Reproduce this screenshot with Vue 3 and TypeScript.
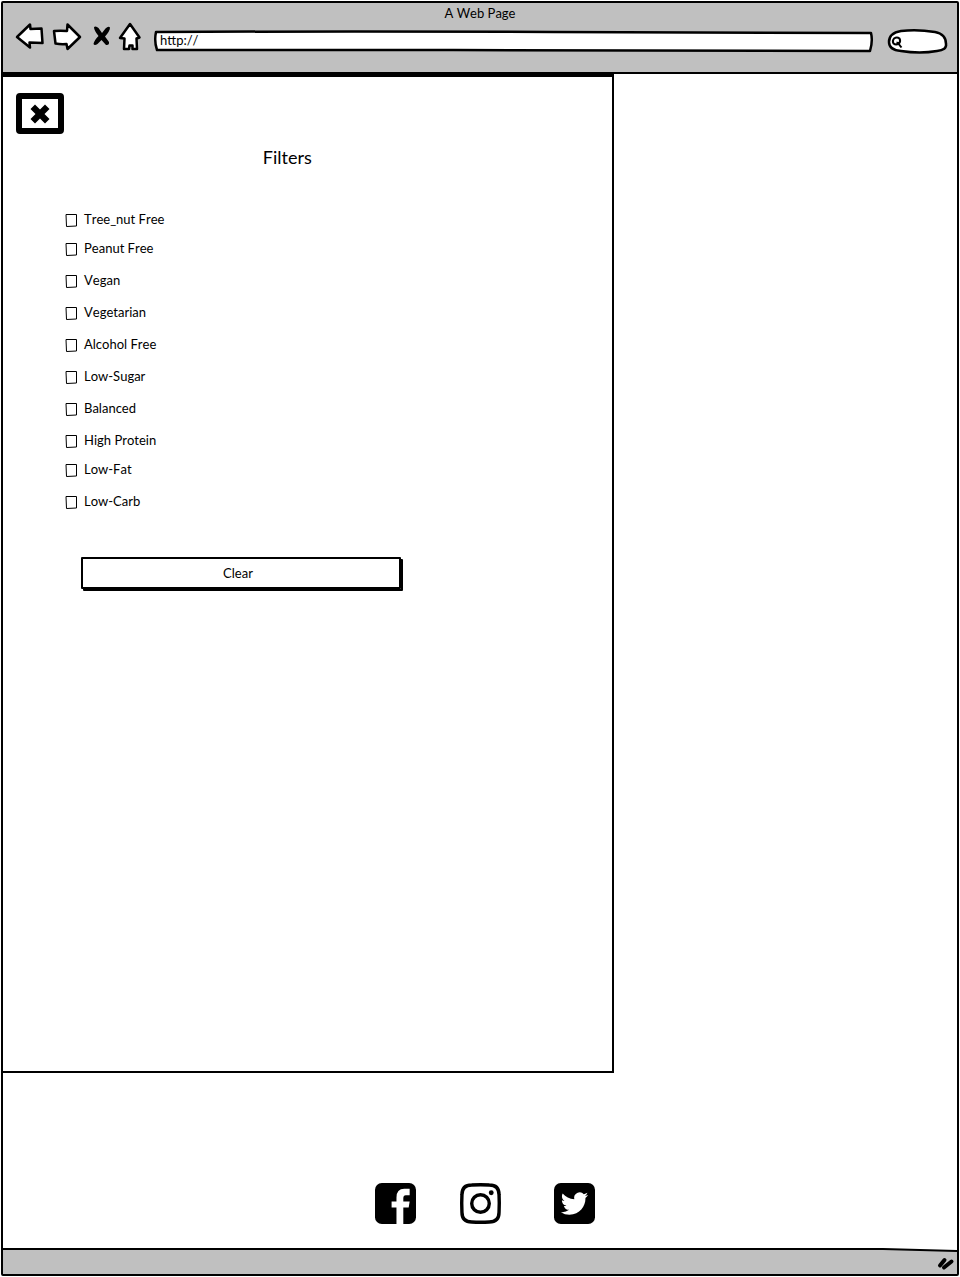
<script setup lang="ts">
import { ref } from 'vue'

interface Filter {
  id: string
  label: string
  compact?: boolean
}

const filters: Filter[] = [
  { id: 'tree-nut-free', label: 'Tree_nut Free', compact: true },
  { id: 'peanut-free', label: 'Peanut Free' },
  { id: 'vegan', label: 'Vegan' },
  { id: 'vegetarian', label: 'Vegetarian' },
  { id: 'alcohol-free', label: 'Alcohol Free' },
  { id: 'low-sugar', label: 'Low-Sugar' },
  { id: 'balanced', label: 'Balanced' },
  { id: 'high-protein', label: 'High Protein', compact: true },
  { id: 'low-fat', label: 'Low-Fat' },
  { id: 'low-carb', label: 'Low-Carb' },
]

const selected = ref<string[]>([])
const address = ref('http://')
const query = ref('')
const open = ref(true)

function clearFilters(): void {
  selected.value = []
}
</script>

<template>
  <div class="browser">
    <header class="chrome">
      <p class="page-title">A Web Page</p>
      <div class="toolbar">
        <button class="tool" type="button" aria-label="Back">
          <svg width="28" height="28" viewBox="0 0 28 28">
            <path class="outline" d="M1 15 14 2.500 14.500 7 25.500 6.500 26.500 21 13.500 20.500 14 25.500Z" />
          </svg>
        </button>
        <button class="tool" type="button" aria-label="Forward">
          <svg width="30" height="28" viewBox="0 0 30 28">
            <path class="outline" d="M2 9Q9 8.500 15 9L15.500 2.500 28 15 15.500 27 14.500 22Q9 22.500 3.500 21.500Z" />
          </svg>
        </button>
        <button class="tool" type="button" aria-label="Stop">
          <svg width="21" height="28" viewBox="0 0 21 28">
            <path d="M4 5Q6 3.500 8.500 6L12 11 15.500 6.500Q18.500 3.500 20 5.500 20 9 15 14.500L19 20Q19.500 23.500 16 23L11.500 18 7.500 22Q4.500 24 3.500 22 4 18.500 8.500 14 4 8.500 4 5Z" />
          </svg>
        </button>
        <button class="tool" type="button" aria-label="Home">
          <svg width="22" height="28" viewBox="0 0 22 28">
            <path class="outline" d="M11 2 20.500 15.500 17.500 16.500 18 27 13.500 27 13.500 23.500 10.500 23.500 10 27 5 27 5.500 16.500 1 16Z" />
          </svg>
        </button>
        <div class="field address">
          <svg class="shape" viewBox="0 0 720 22" preserveAspectRatio="none" aria-hidden="true">
            <path class="outline" d="M2 2Q200 1 400 2T718 3Q720 11 717 21Q500 20 300 20T3 20Q0 11 2 2Z" />
          </svg>
          <input v-model="address" type="text" aria-label="Address" />
        </div>
        <div class="field search">
          <svg class="shape" viewBox="0 0 61 26" preserveAspectRatio="none" aria-hidden="true">
            <path class="outline" d="M14 3Q30 1 48 4Q59 6 59 16Q60 22 50 23Q33 26 14 23Q2 22 2 14Q2 5 14 3Z" />
          </svg>
          <svg class="lens" width="12" height="13" viewBox="0 0 12 13" aria-hidden="true">
            <path d="M3 2.500Q6 .5 8.500 2.500 10 5.500 8 7.500 5 9.500 2.500 7.500 1 5 3 2.500ZM5.500 6.500Q8 7 8.500 9L10.500 11.500" />
          </svg>
          <input v-model="query" type="search" aria-label="Search" />
        </div>
      </div>
    </header>

    <main class="content">
      <aside v-if="open" class="panel">
        <button class="close" type="button" aria-label="Close filters" @click="open = false">
          <svg width="20" height="20" viewBox="0 0 20 20">
            <path d="M5 .5 10 5.500 15 .5 19.500 5 14.500 10 19.500 15 15 19.500 10 14.500 5 19.500 .5 15 5.500 10 .5 5Z" />
          </svg>
        </button>
        <h1>Filters</h1>
        <ul class="filters">
          <li v-for="item in filters" :key="item.id" :class="{ compact: item.compact }">
            <label :for="item.id">
              <span class="check">
                <input :id="item.id" v-model="selected" type="checkbox" :value="item.id" />
                <svg width="12" height="14" viewBox="0 0 12 14" aria-hidden="true">
                  <path d="M1 1.500 11.500 1.500 11.500 13 1.500 13.500Z" />
                  <path class="tick" d="M3 7 5 10 9 4" />
                </svg>
              </span>
              <span>{{ item.label }}</span>
            </label>
          </li>
        </ul>
        <button class="clear" type="button" @click="clearFilters">Clear</button>
      </aside>

      <nav class="social" aria-label="Social media">
        <a href="#facebook" aria-label="Facebook">
          <svg width="41" height="41" viewBox="0 0 42 42">
            <rect width="42" height="42" rx="7" />
            <path fill="#fff" d="M22 42V25H17V19H22V15Q22 6 30 6H35.500V12.500H31.500Q29 12.500 29 15.500V19H35.500L34.500 25H29V42Z" />
          </svg>
        </a>
        <a href="#instagram" aria-label="Instagram">
          <svg width="41" height="41" viewBox="0 0 42 42">
            <path fill="none" stroke="#000" stroke-width="3.500" d="M12 2Q21 1.500 30 2 40 2 40 12 40.500 21 40 30 40 40 30 40 21 40.500 12 40 2 40 2 30 1.500 21 2 12 2 2 12 2Z" />
            <circle cx="21" cy="21" r="9" fill="none" stroke="#000" stroke-width="3.500" />
            <circle cx="32" cy="10" r="2.500" />
          </svg>
        </a>
        <a class="twitter" href="#twitter" aria-label="Twitter">
          <svg width="41" height="41" viewBox="0 0 42 42">
            <rect width="42" height="42" rx="7" />
            <path fill="#fff" transform="translate(7 7) scale(1.170)" d="M23.950 4.570a10 10 0 0 1-2.820.77 4.960 4.960 0 0 0 2.160-2.720c-.95.55-2 .95-3.120 1.180a4.920 4.920 0 0 0-8.380 4.480C7.690 8.090 4.070 6.130 1.640 3.160a4.800 4.800 0 0 0-.67 2.480c0 1.710.87 3.210 2.190 4.100a4.900 4.900 0 0 1-2.230-.62v.06a4.920 4.920 0 0 0 3.950 4.830 5 5 0 0 1-2.210.08 4.940 4.940 0 0 0 4.600 3.420A9.870 9.870 0 0 1 0 19.540a14 14 0 0 0 7.550 2.210c9.050 0 14-7.500 14-13.980q0-.32-.02-.63a10 10 0 0 0 2.420-2.570Z" />
          </svg>
        </a>
      </nav>
    </main>

    <footer class="status">
      <svg class="shape" viewBox="0 0 954 26" preserveAspectRatio="none" aria-hidden="true">
        <path fill="#c0c0c0" stroke="none" d="M0 1Q450 2 880 1L954 3V26H0Z" />
        <path class="rule" d="M0 1Q450 2 880 1L954 3" />
      </svg>
      <svg class="grip" width="18" height="14" viewBox="0 0 18 14" aria-hidden="true">
        <path d="M3 9.500 7.500 4M7 11.500 14.500 5.500" fill="none" stroke="#000" stroke-width="4" stroke-linecap="round" />
      </svg>
    </footer>
  </div>
</template>

<style>
body {
  margin: 0;
  background: #fff;
}
</style>

<style scoped>
.browser {
  box-sizing: border-box;
  display: flex;
  flex-direction: column;
  min-height: calc(100vh - 2px);
  margin: 1px;
  border: 2px solid #000;
  border-radius: 2px;
  color: #000;
  font: 13px/16px Lato, "Noto Sans", sans-serif;
  font-kerning: none;
}

button,
input {
  margin: 0;
  padding: 0;
  border: 0;
  background: none;
  color: inherit;
  font: inherit;
  font-kerning: none;
}

svg {
  display: block;
  overflow: visible;
}

.outline {
  fill: #fff;
  stroke: #000;
  stroke-width: 2.5;
  stroke-linejoin: round;
  vector-effect: non-scaling-stroke;
}

.chrome {
  padding-bottom: 17px;
  border-bottom: 2px solid #000;
  background: #c0c0c0;
}

.page-title {
  margin: 0;
  padding: 2px 0 1px;
  text-align: center;
}

.toolbar {
  display: flex;
  align-items: flex-start;
  gap: 8px;
  height: 33px;
  padding: 0 9px 0 13px;
}

.tool {
  flex: none;
}

.field {
  position: relative;
  display: flex;
  align-items: center;
}

.shape {
  position: absolute;
  inset: 0;
  width: 100%;
  height: 100%;
}

.address {
  flex: 1;
  height: 22px;
  margin: 8px 6px 0 5px;
}

.address input {
  position: relative;
  width: 100%;
  padding: 0 6px 2px;
  outline: none;
}

.search {
  width: 61px;
  height: 26px;
  margin-top: 6px;
}

.lens {
  position: relative;
  flex: none;
  margin: 2px 0 0 4px;
  fill: none;
  stroke: #000;
  stroke-width: 2;
}

.search input {
  position: relative;
  width: 36px;
  outline: none;
}

.content {
  display: flex;
  flex: 1;
  flex-direction: column;
}

.panel {
  box-sizing: border-box;
  flex: 1;
  width: 64%;
  padding: 16px 13px;
  border: solid #000;
  border-width: 3px 2px 2px 0;
}

.close {
  display: grid;
  place-items: center;
  width: 48px;
  height: 41px;
  border: 6px solid #000;
  border-radius: 4px;
}

h1 {
  margin: 11px 40px 41px 0;
  font-size: 18px;
  font-weight: 400;
  line-height: 24px;
  text-align: center;
}

.filters {
  margin: 0;
  padding: 0 0 0 49px;
  list-style: none;
}

.filters li {
  height: 32px;
}

.filters .compact {
  height: 29px;
}

.filters label {
  display: inline-flex;
  align-items: center;
  gap: 7px;
  height: 20px;
}

.filters label > span:last-child {
  padding-bottom: 2px;
}

.check {
  display: grid;
}

.check input,
.check svg {
  grid-area: 1 / 1;
}

.check input {
  width: 12px;
  height: 14px;
  appearance: none;
}

.check svg {
  fill: none;
  stroke: #000;
  pointer-events: none;
}

.tick {
  visibility: hidden;
}

.check input:checked + svg .tick {
  visibility: visible;
}

.clear {
  width: 320px;
  height: 32px;
  margin: 33px 0 0 65px;
  padding-right: 6px;
  border: 2px solid #000;
  border-radius: 1px;
  box-shadow: 2px 2px #000;
}

.social {
  display: flex;
  justify-content: center;
  gap: 44px;
  padding: 110px 0 24px 9px;
}

.twitter {
  margin-left: 9px;
}

.status {
  position: relative;
  display: flex;
  justify-content: flex-end;
  height: 26px;
}

.rule {
  fill: none;
  stroke: #000;
  stroke-width: 2;
  vector-effect: non-scaling-stroke;
}

.grip {
  position: relative;
  margin: 8px 2px 0 0;
}
</style>
